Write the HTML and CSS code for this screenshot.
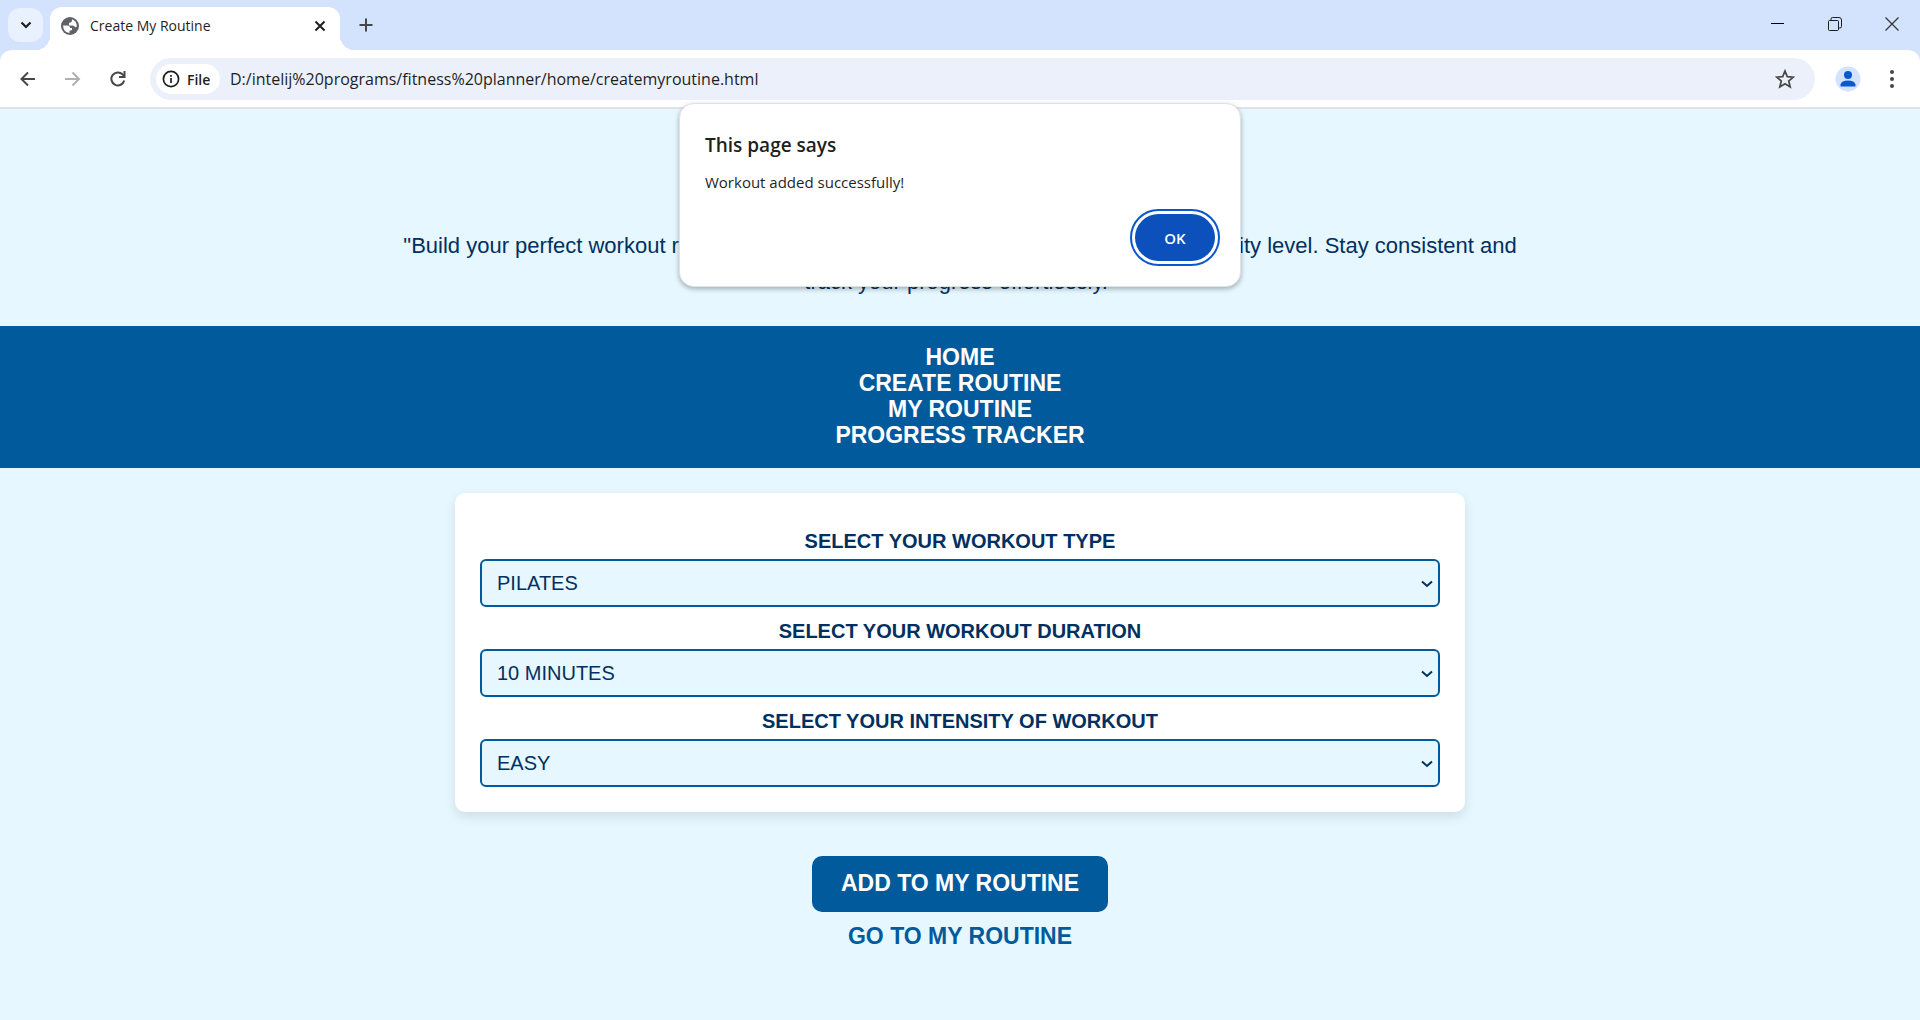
FILE: index.html
```html
<!DOCTYPE html>
<html lang="en">
<head>
<meta charset="utf-8">
<title>Create My Routine</title>
<link rel="stylesheet" href="styles.css">
</head>
<body>
<header class="browser">
  <div class="tabstrip">
    <button class="tab-search" aria-label="Search tabs"><svg width="12" height="8" viewBox="0 0 12 8"><path d="M1.5 1.5 6 6l4.500-4.500" fill="none" stroke="#1f1f1f" stroke-width="2.200"/></svg></button>
    <div class="tab">
      <svg width="18" height="18" viewBox="0 0 18 18"><circle cx="9" cy="9" r="9" fill="#5f6368"/><path d="M2 8.500h4.500q2.500 0 2.500 2.500h2v1.500q0 1-1.500 1H8.500V16q-6-.500-6.500-7.500ZM11 2.300q5 2 4.800 7.200-1.300 1.500-2.300 0T10.500 8.500H8V6.500q0-1 1.500-1 1.500 0 1.500-3.200Z" fill="#fff"/></svg>
      <span class="tab-title">Create My Routine</span>
      <button class="tab-close" aria-label="Close tab"><svg width="12" height="12" viewBox="0 0 12 12"><path d="m1.500 1.500 9 9m0-9-9 9" stroke="#1f1f1f" stroke-width="2"/></svg></button>
    </div>
    <button class="new-tab" aria-label="New tab"><svg width="14" height="14" viewBox="0 0 14 14"><path d="M7 .500v13M.500 7h13" stroke="#444746" stroke-width="2"/></svg></button>
    <div class="window-controls">
      <button aria-label="Minimize"><svg width="14" height="14" viewBox="0 0 14 14"><path d="M0 6.500h13" stroke="#000"/></svg></button>
      <button aria-label="Restore"><svg width="14" height="14" viewBox="0 0 14 14" fill="none" stroke="#1f1f1f"><rect x=".5" y="3.500" width="10" height="10" rx="1"/><path d="M3 3.500V2q0-1.500 1.500-1.500H11Q13.500.500 13.500 3v6.500q0 1.500-1.500 1.500h-1.500"/></svg></button>
      <button aria-label="Close"><svg width="14" height="14" viewBox="0 0 14 14"><path d="m.500.500 13 13m0-13-13 13" stroke="#333" stroke-width="1.200"/></svg></button>
    </div>
  </div>
  <div class="toolbar">
    <div class="nav-buttons">
      <button aria-label="Back"><svg width="16" height="16" viewBox="0 0 16 16" fill="none" stroke="#474747" stroke-width="2"><path d="M15 8H2M8 1.500 1.500 8 8 14.500"/></svg></button>
      <button aria-label="Forward"><svg width="16" height="16" viewBox="0 0 16 16" fill="none" stroke="#b0b0b0" stroke-width="2"><path d="M0 8h13M7.500 1.500 14 8l-6.500 6.500"/></svg></button>
      <button aria-label="Reload"><svg width="16" height="16" viewBox="0 0 16 16" fill="none" stroke="#474747" stroke-width="2"><path d="M14.200 9.500A6.500 6.500 0 1 1 12.500 3.300l2 2"/><path d="M14.500 0v6H9"/></svg></button>
    </div>
    <div class="omnibox">
      <button class="chip"><svg width="18" height="18" viewBox="0 0 18 18"><circle cx="9" cy="9" r="7.600" fill="none" stroke="#1f1f1f" stroke-width="1.700"/><path d="M9 8v5M9 5v1.700" stroke="#1f1f1f" stroke-width="1.700"/></svg>File</button>
      <input class="url" aria-label="Address" value="D:/intelij%20programs/fitness%20planner/home/createmyroutine.html">
      <button class="star" aria-label="Bookmark this page"><svg width="20" height="20" viewBox="0 0 20 20"><path d="m10 2 2.300 5.600 6 .500-4.600 3.900 1.500 6L10 14.800 4.800 18l1.500-6-4.600-3.900 6-.500Z" fill="none" stroke="#474747" stroke-width="1.700"/></svg></button>
    </div>
    <button class="avatar" aria-label="Profile"><svg width="26" height="26" viewBox="0 0 26 26"><circle cx="13" cy="13" r="12.500" fill="#d3e3fd"/><circle cx="13" cy="9" r="4" fill="#0b57d0"/><path d="M5.500 20.500v-2Q6.500 14.500 13 14.500t7.500 4v2Z" fill="#0b57d0"/></svg></button>
    <button class="menu" aria-label="Menu"><svg width="4" height="18" viewBox="0 0 4 18" fill="#474747"><circle cx="2" cy="2" r="2"/><circle cx="2" cy="9" r="2"/><circle cx="2" cy="16" r="2"/></svg></button>
  </div>
  <section class="dialog" role="alertdialog" aria-labelledby="dialog-title">
    <h2 id="dialog-title">This page says</h2>
    <p>Workout added successfully!</p>
    <button class="ok">OK</button>
  </section>
</header>
<main class="page">
  <p class="intro">"Build your perfect workout routine by selecting the exercise type, duration, and intensity level. Stay consistent and track your progress effortlessly."</p>
  <nav class="site-nav">
    <a href="#home">HOME</a>
    <a href="#create">CREATE ROUTINE</a>
    <a href="#routine">MY ROUTINE</a>
    <a href="#progress">PROGRESS TRACKER</a>
  </nav>
  <form class="card" id="routine-form">
    <label for="type">SELECT YOUR WORKOUT TYPE</label>
    <div class="field"><select id="type"><option>PILATES</option></select><svg class="arrow" width="12" height="8" viewBox="0 0 12 8"><path d="m1 1.500 5 4.500 5-4.500"/></svg></div>
    <label for="duration">SELECT YOUR WORKOUT DURATION</label>
    <div class="field"><select id="duration"><option>10 MINUTES</option></select><svg class="arrow" width="12" height="8" viewBox="0 0 12 8"><path d="m1 1.500 5 4.500 5-4.500"/></svg></div>
    <label for="intensity">SELECT YOUR INTENSITY OF WORKOUT</label>
    <div class="field"><select id="intensity"><option>EASY</option></select><svg class="arrow" width="12" height="8" viewBox="0 0 12 8"><path d="m1 1.500 5 4.500 5-4.500"/></svg></div>
  </form>
  <div class="actions">
    <button class="add" form="routine-form" type="button">ADD TO MY ROUTINE</button>
    <a class="go" href="#routine">GO TO MY ROUTINE</a>
  </div>
</main>
</body>
</html>
```
FILE: styles.css
```css
* { box-sizing: border-box; }
body {
  margin: 0;
  min-height: 100vh;
  background: #e6f7ff;
  color: #003060;
  font-family: "Liberation Sans", Arial, sans-serif;
}
button { border: 0; padding: 0; background: none; font: inherit; color: inherit; cursor: pointer; }
svg { display: block; flex: none; }

/* Browser frame */
.browser {
  position: relative;
  font-family: "Open Sans", "Noto Sans", sans-serif;
  color: #1f1f1f;
  background: #d3e3fd;
}
.tabstrip { display: flex; height: 50px; padding-left: 8px; }
.tab-search {
  display: grid;
  place-items: center;
  width: 35px;
  height: 34px;
  margin: 8px 7px 0 0;
  border-radius: 12px;
  background: #e9f0fe;
}
.tab {
  position: relative;
  display: flex;
  align-items: center;
  width: 290px;
  height: 43px;
  margin-top: 7px;
  padding: 0 14px 6px 11px;
  border-radius: 12px 12px 0 0;
  background: #fff;
}
.tab::before, .tab::after {
  content: "";
  position: absolute;
  bottom: 0;
  width: 14px;
  height: 14px;
}
.tab::before { right: 100%; background: radial-gradient(circle at 0 0, transparent 14px, #fff 14px); }
.tab::after { left: 100%; background: radial-gradient(circle at 100% 0, transparent 14px, #fff 14px); }
.tab-title { flex: 1; margin-left: 11px; font-size: 14px; }
.new-tab { display: grid; place-items: center; width: 36px; height: 50px; margin-left: 8px; }
.window-controls { display: flex; margin-left: auto; }
.window-controls button { display: grid; place-items: center; width: 57px; height: 48px; }
.toolbar {
  display: flex;
  align-items: center;
  padding: 8px 10px 7px;
  border-bottom: 2px solid #e1e3e1;
  border-radius: 12px 12px 0 0;
  background: #fff;
}
.nav-buttons { display: flex; gap: 9px; margin-right: 14px; }
.nav-buttons button, .menu { display: grid; place-items: center; width: 36px; height: 36px; }
.omnibox {
  display: flex;
  flex: 1;
  align-items: center;
  height: 42px;
  padding: 0 20px 0 6px;
  border-radius: 21px;
  background: #ebf0fa;
}
.chip {
  display: flex;
  align-items: center;
  gap: 7px;
  width: 64px;
  height: 30px;
  padding-left: 6px;
  border-radius: 15px;
  background: #fff;
  font-size: 14px;
  font-weight: 600;
}
.url {
  flex: 1;
  min-width: 0;
  margin-left: 10px;
  padding: 0;
  border: 0;
  background: none;
  color: #1f1f1f;
  font: 16px "Open Sans", "Noto Sans", sans-serif;
}
.avatar { margin: 0 13px 0 20px; }

/* Alert over the page */
.dialog {
  position: absolute;
  z-index: 1;
  top: 103px;
  left: 50%;
  width: 562px;
  padding: 28px 25px;
  transform: translateX(-50%);
  border: 1px solid #e0e3e3;
  border-radius: 15px;
  background: #fff;
  box-shadow: 0 2px 5px rgba(0, 0, 0, .3);
}
.dialog h2 { margin: 0; font-size: 19px; font-weight: 600; line-height: 26px; }
.dialog p { margin: 14px 0 20px; font-size: 15px; line-height: 20px; }
.ok {
  display: block;
  width: 80px;
  height: 47px;
  margin-left: auto;
  border-radius: 24px;
  outline: 2px solid #0b57d0;
  outline-offset: 3px;
  background: #0b50bb;
  color: #fff;
  font-size: 15px;
  font-weight: 600;
}
.dialog { padding-bottom: 25px; }
.dialog p { margin-bottom: 22px; }

/* Page */
.page { text-align: center; }
.intro {
  max-width: 1170px;
  margin: 0 auto;
  padding: 119px 20px 26px;
  font-size: 22px;
  line-height: 36px;
}
.site-nav {
  display: flex;
  flex-direction: column;
  align-items: center;
  padding: 18px 20px 20px;
  background: #005a9c;
}
.site-nav a, .add, .go {
  font-size: 23px;
  font-weight: 700;
  line-height: 26px;
  text-decoration: none;
}
.site-nav a { color: #fff; }
.card {
  max-width: 1010px;
  margin: 25px auto 44px;
  padding: 24px 25px 25px;
  border-radius: 10px;
  background: #fff;
  box-shadow: 0 5px 12px rgba(0, 0, 0, .1);
}
.card label { display: block; padding: 13px 0 6px; color: #003060; font-size: 20px; font-weight: 700; line-height: 23px; }
.field { position: relative; }
.field select {
  display: block;
  width: 100%;
  height: 48px;
  padding: 0 15px 1px;
  appearance: none;
  border: 2px solid #005a9c;
  border-radius: 6px;
  background: #e6f7ff;
  color: #003060;
  font: 20px "Liberation Sans", Arial, sans-serif;
}
.arrow {
  position: absolute;
  top: 21px;
  right: 7px;
  fill: none;
  stroke: #003060;
  stroke-width: 2;
  pointer-events: none;
}
.actions { display: flex; flex-direction: column; align-items: center; gap: 11px; }
.add { padding: 14px 29px 16px; border-radius: 10px; background: #005a9c; color: #fff; }
.go { color: #005a9c; }
```
